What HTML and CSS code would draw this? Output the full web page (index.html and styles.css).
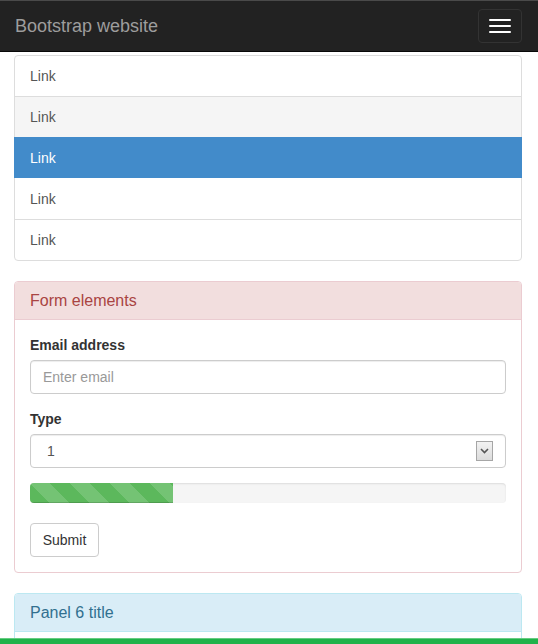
FILE: index.html
```html
<!DOCTYPE html>
<html lang="en">
<head>
	<meta charset="UTF-8">
	<title>Bootstrap website</title>
	<link rel="stylesheet" href="styles.css">
</head>
<body>
	<div class="navbar">
		<span class="brand">Bootstrap website</span>
		<button class="toggle" type="button">
			<span class="bar"></span>
			<span class="bar"></span>
			<span class="bar"></span>
		</button>
	</div>
	<div class="container">
		<div class="list-group">
			<a class="item" href="#">Link</a>
			<a class="item hover" href="#">Link</a>
			<a class="item active" href="#">Link</a>
			<a class="item" href="#">Link</a>
			<a class="item" href="#">Link</a>
		</div>

		<div class="panel danger">
			<div class="panel-heading">Form elements</div>
			<div class="panel-body">
				<div class="form-group">
					<label>Email address</label>
					<input class="control" type="email" placeholder="Enter email">
				</div>
				<div class="form-group">
					<label>Type</label>
					<div class="select-wrap">
						<select class="control select">
							<option>1</option>
							<option>2</option>
							<option>3</option>
						</select>
						<span class="arrow">
							<svg width="9" height="6" viewBox="0 0 9 6"><path d="M1 1 L4.5 4.5 L8 1" fill="none" stroke="#555" stroke-width="1.6"/></svg>
						</span>
					</div>
				</div>
				<div class="progress">
					<div class="progress-bar" style="width: 30%"></div>
				</div>
				<button class="btn" type="submit">Submit</button>
			</div>
		</div>

		<div class="panel info">
			<div class="panel-heading">Panel 6 title</div>
			<div class="panel-body empty"></div>
		</div>
	</div>
	<div class="bottom-bar"></div>
</body>
</html>
```

FILE: styles.css
```css
html, body, div, ul, li, label, input, select, button {
	padding: 0;
	margin: 0;
}
html {
	overflow: hidden;
}
body {
	font-family: "Liberation Sans", Arial, sans-serif;
	font-size: 14px;
	line-height: 20px;
	color: #333;
	background: #fff;
}
.navbar {
	height: 50px;
	background: #222;
	border-top: 1px solid #4a4a4a;
	border-bottom: 1px solid #080808;
	display: flex;
	align-items: center;
	justify-content: space-between;
	padding: 0 16px 0 15px;
}
.brand {
	font-size: 18px;
	color: #9d9d9d;
}
.toggle {
	width: 44px;
	height: 34px;
	border: 1px solid #333;
	border-radius: 4px;
	background: transparent;
	display: flex;
	flex-direction: column;
	align-items: center;
	justify-content: center;
	gap: 4px;
}
.toggle .bar {
	display: block;
	width: 22px;
	height: 2px;
	background: #fff;
	border-radius: 1px;
}
.container {
	padding: 3px 16px 0 14px;
}
.list-group {
	margin-bottom: 20px;
	border: 1px solid #ddd;
	border-radius: 4px;
}
.list-group .item {
	display: block;
	padding: 10px 15px;
	color: #555;
	text-decoration: none;
	border-top: 1px solid #ddd;
}
.list-group .item:first-child {
	border-top: none;
}
.list-group .item.hover {
	background: #f5f5f5;
}
.list-group .item.active {
	background: #428bca;
	color: #fff;
	margin: 0 -1px;
	padding: 10px 16px;
	border-top-color: #428bca;
}
.list-group .item.active + .item {
	border-top: none;
	padding-top: 11px;
}
.panel {
	margin-bottom: 20px;
	border: 1px solid #ddd;
	border-radius: 4px;
	background: #fff;
}
.panel-heading {
	padding: 10px 15px;
	font-size: 16px;
	line-height: 17px;
	border-bottom: 1px solid #ddd;
	border-radius: 3px 3px 0 0;
}
.panel-body {
	padding: 15px;
}
.panel-body.empty {
	height: 40px;
}
.danger {
	border-color: #ebccd1;
}
.danger .panel-heading {
	background: #f2dede;
	color: #a94442;
	border-bottom-color: #ebccd1;
}
.info {
	border-color: #bce8f1;
}
.info .panel-heading {
	background: #d9edf7;
	color: #31708f;
	border-bottom-color: #bce8f1;
}
.form-group {
	margin-bottom: 15px;
}
label {
	display: block;
	font-weight: bold;
	margin-bottom: 5px;
}
.control {
	display: block;
	width: 100%;
	height: 34px;
	padding: 6px 12px;
	box-sizing: border-box;
	font-family: inherit;
	font-size: 14px;
	color: #555;
	background: #fff;
	border: 1px solid #ccc;
	border-radius: 4px;
	box-shadow: inset 0 1px 1px rgba(0,0,0,.075);
	outline: none;
}
.control::placeholder {
	color: #999;
}
.select-wrap {
	position: relative;
}
.select {
	appearance: none;
	-webkit-appearance: none;
	padding-left: 16px;
}
.arrow {
	position: absolute;
	right: 13px;
	top: 7px;
	width: 15px;
	height: 18px;
	border: 1px solid #a6a6a6;
	background: linear-gradient(#f2f2f2, #dcdcdc);
	display: flex;
	align-items: center;
	justify-content: center;
	pointer-events: none;
}
.progress {
	height: 20px;
	margin-bottom: 20px;
	background: #f5f5f5;
	border-radius: 4px;
	overflow: hidden;
	box-shadow: inset 0 1px 2px rgba(0,0,0,.1);
}
.progress-bar {
	height: 100%;
	background-color: #5cb85c;
	background-image: linear-gradient(45deg, rgba(255,255,255,.15) 25%, transparent 25%, transparent 50%, rgba(255,255,255,.15) 50%, rgba(255,255,255,.15) 75%, transparent 75%, transparent);
	background-size: 40px 40px;
	box-shadow: inset 0 -1px 0 rgba(0,0,0,.15);
}
.btn {
	width: 69px;
	height: 34px;
	padding: 6px 0;
	text-align: center;
	font-family: inherit;
	font-size: 14px;
	color: #333;
	background: #fff;
	border: 1px solid #ccc;
	border-radius: 4px;
}
.bottom-bar {
	position: fixed;
	left: 0;
	right: 0;
	bottom: 0;
	height: 5px;
	background: #20b24a;
	border-top: 1px solid #66cc80;
}
```
